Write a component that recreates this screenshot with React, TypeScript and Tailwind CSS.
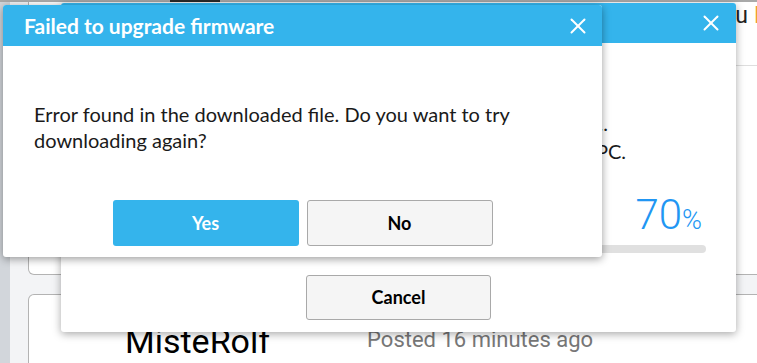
import React from 'react';

const CloseIcon: React.FC = () => (
  <svg width="16" height="16" viewBox="0 0 16 16" fill="none" stroke="white" strokeWidth="2" strokeLinecap="round">
    <path d="M1.5 1.5 14.5 14.5" />
    <path d="M14.5 1.5 1.5 14.5" />
  </svg>
);

const App: React.FC = () => {
  return (
    <div className="relative w-[757px] h-[363px] overflow-hidden bg-white font-['Roboto',sans-serif]">
      {/* page behind the dialogs */}
      <div className="flex h-[2px] bg-[#a9a9a9]">
        <div className="ml-[170px] w-[50px] bg-[#2b2b2b]" />
      </div>
      <div className="flex h-[361px]">
        <div className="shrink-0 w-[10px] bg-[#d2d6db]" />
        <div className="flex-1 min-w-0 flex flex-col bg-[#f3f4f6] pl-[18px] mr-[-12px]">
          <div className="h-[273px] bg-white border border-t-0 border-[#b3b3b3] rounded-b-[6px] overflow-hidden">
            <div className="flex items-start h-[64px] border-b border-[#dedede] pt-[2px]">
              <span className="shrink-0 w-[719px] text-right text-[23px] leading-none text-[#222]">Thank you</span>
              <span className="shrink-0 ml-[6px] text-[23px] leading-none text-[#f0a030]">Reply</span>
            </div>
          </div>
          <div className="mt-[19px] flex-1 flex items-start bg-white border border-b-0 border-[#b3b3b3] rounded-t-[6px] pl-[96px] overflow-hidden">
            <span className="shrink-0 pt-[29px] text-[34px] leading-none text-black">MisteRolf</span>
            <span className="shrink-0 pt-[34px] ml-[97px] text-[22px] leading-none text-[#777]">Posted 16 minutes ago</span>
          </div>
        </div>
      </div>

      {/* download progress dialog */}
      <div className="absolute left-[61px] top-[3px] w-[675px] h-[329px] flex flex-col bg-white rounded-[3px] shadow-[0_2px_8px_rgba(0,0,0,0.35)] font-['Lato',sans-serif] overflow-hidden">
        <div className="h-[40px] flex items-center justify-between pl-[20px] pr-[17px] bg-[#34b4ec] text-white text-[21px] font-bold">
          <span>Upgrading firmware</span>
          <CloseIcon />
        </div>
        <div className="flex flex-col pt-[66px] text-[20px] leading-[28px] text-[#1a1a1a]">
          <div className="text-right pr-[128px]">Downloading the firmware update...</div>
          <div className="text-right pr-[110px]">Please do not turn off or disconnect the PC.</div>
        </div>
        <div className="mt-[29px] flex justify-end items-baseline pr-[34px] text-[#2196f3] font-['Roboto',sans-serif] font-light leading-none">
          <span className="text-[42px]">70</span>
          <span className="text-[27px]">%</span>
        </div>
        <div className="mt-[9px] mx-[30px] h-[8px] rounded-full bg-[#e0e0e0] flex">
          <div className="w-[70%] rounded-full bg-[#34b4ec]" />
        </div>
        <div className="mt-[22px] flex justify-center">
          <button className="w-[185px] h-[45px] rounded-[3px] border border-[#a9a9a9] bg-[#f5f5f5] text-[18px] font-bold text-black">
            Cancel
          </button>
        </div>
      </div>

      {/* error dialog */}
      <div className="absolute left-[3px] top-[5px] w-[599px] h-[252px] flex flex-col bg-white rounded-[3px] shadow-[0_2px_9px_rgba(0,0,0,0.4)] font-['Lato',sans-serif] overflow-hidden">
        <div className="h-[41px] flex items-center justify-between pl-[21px] pr-[16px] bg-[#34b4ec] text-white text-[21px] font-bold">
          <span>Failed to upgrade firmware</span>
          <CloseIcon />
        </div>
        <div className="pt-[55px] pl-[31px] pr-[60px] text-[20px] leading-[26px] text-[#1a1a1a]">
          Error found in the downloaded file. Do you want to try downloading again?
        </div>
        <div className="mt-[47px] flex justify-center gap-[8px]">
          <button className="w-[186px] h-[46px] rounded-[3px] bg-[#34b4ec] text-[18px] font-bold text-white">
            Yes
          </button>
          <button className="w-[186px] h-[46px] rounded-[3px] border border-[#a9a9a9] bg-[#f5f5f5] text-[18px] font-bold text-black">
            No
          </button>
        </div>
      </div>
    </div>
  );
};

export default App;
